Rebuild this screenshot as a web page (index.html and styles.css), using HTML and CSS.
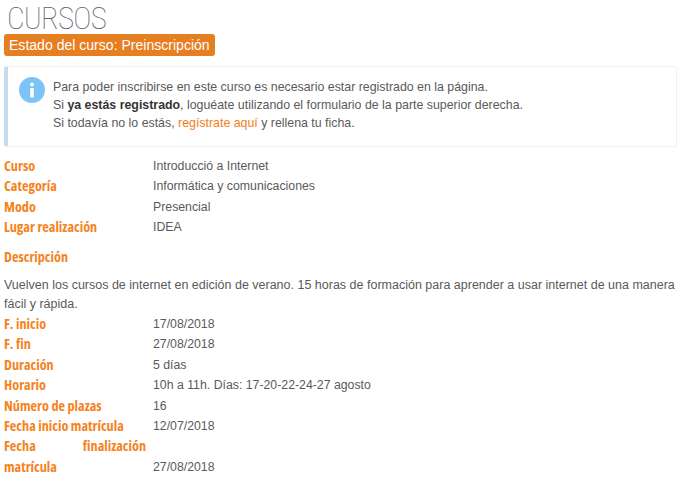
FILE: index.html
```html
<!DOCTYPE html>
<html lang="es">
<head>
  <meta charset="UTF-8">
  <title>Cursos</title>
  <link rel="stylesheet" href="styles.css">
</head>
<body>
  <h1 class="title">CURSOS</h1>
  <span class="status">Estado del curso: Preinscripción</span>

  <div class="notice">
    <svg class="notice-icon" width="26" height="26" viewBox="0 0 26 26">
      <circle cx="13" cy="13" r="13" fill="#7cc4f8"/>
      <circle cx="13" cy="7.6" r="2" fill="#fff"/>
      <rect x="11.2" y="11" width="3.6" height="9.4" rx="0.6" fill="#fff"/>
    </svg>
    <p>
      Para poder inscribirse en este curso es necesario estar registrado en la página.<br>
      Si <strong>ya estás registrado</strong>, loguéate utilizando el formulario de la parte superior derecha.<br>
      Si todavía no lo estás, <a href="#">regístrate aquí</a> y rellena tu ficha.
    </p>
  </div>

  <dl class="fields">
    <dt>Curso</dt><dd>Introducció a Internet</dd>
    <dt>Categoría</dt><dd>Informática y comunicaciones</dd>
    <dt>Modo</dt><dd>Presencial</dd>
    <dt>Lugar realización</dt><dd>IDEA</dd>
  </dl>

  <h2 class="section">Descripción</h2>
  <p class="description">Vuelven los cursos de internet en edición de verano. 15 horas de formación para aprender a usar internet de una manera fácil y rápida.</p>

  <dl class="fields">
    <dt>F. inicio</dt><dd>17/08/2018</dd>
    <dt>F. fin</dt><dd>27/08/2018</dd>
    <dt>Duración</dt><dd>5 días</dd>
    <dt>Horario</dt><dd>10h a 11h. Días: 17-20-22-24-27 agosto</dd>
    <dt>Número de plazas</dt><dd>16</dd>
    <dt>Fecha inicio matrícula</dt><dd>12/07/2018</dd>
    <dt class="justified">Fecha finalización matrícula</dt><dd>27/08/2018</dd>
  </dl>
</body>
</html>
```

FILE: styles.css
```css
body {
  margin: 0;
  padding: 0 3px 0 4px;
  font-family: "Liberation Sans", Arial, sans-serif;
  font-size: 12.3px;
  line-height: 20.4px;
  color: #5a5a5a;
  background: #fff;
}

.title {
  margin: 0;
  padding: 3px 0 0 3px;
  font-family: Roboto, sans-serif;
  font-size: 31px;
  font-weight: 100;
  font-stretch: 75%;
  line-height: 31px;
  letter-spacing: -0.8px;
  color: #5a6470;
}

.status {
  display: inline-block;
  padding: 0 5px;
  font-size: 14.05px;
  line-height: 22px;
  color: #fff;
  background: #e67e22;
  border-radius: 3px;
}

.notice {
  display: flex;
  align-items: flex-start;
  gap: 8px;
  margin-top: 10px;
  padding: 12px 10px 13px 11px;
  border: 1px solid #f1f1f1;
  border-left: 4px solid #c9dcee;
  border-radius: 3px;
}

.notice-icon {
  flex-shrink: 0;
  margin-top: -2px;
}

.notice p {
  margin: 0;
  font-size: 12.36px;
  line-height: 17.8px;
}

.notice strong {
  color: #333;
}

.notice a {
  color: #f07d1a;
  text-decoration: none;
}

.fields {
  display: grid;
  grid-template-columns: 149px 1fr;
  align-items: end;
  margin: 0;
}

.notice + .fields {
  margin-top: 8.9px;
}

.fields dt,
.section {
  font-family: "Open Sans", sans-serif;
  font-size: 14.2px;
  font-weight: 700;
  font-stretch: 75%;
  color: #f58220;
}

.fields dd {
  margin: 0;
}

.justified {
  padding-right: 7px;
  text-align: justify;
}

.section {
  margin: 9.2px 0 9px;
  line-height: 20px;
}

.description {
  margin: 0;
  font-size: 12.5px;
  line-height: 19.2px;
}
```
